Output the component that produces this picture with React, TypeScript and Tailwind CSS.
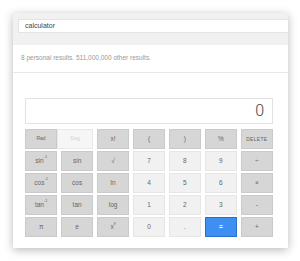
import React from 'react';

type Key = { label: React.ReactNode; kind: 'fn' | 'num' | 'eq' };

const fn = (label: React.ReactNode): Key => ({ label, kind: 'fn' });
const num = (label: React.ReactNode): Key => ({ label, kind: 'num' });

const Inv = ({ name }: { name: string }) => (
  <span>
    {name}
    <sup className="text-[4px] align-super">-1</sup>
  </span>
);

const rows: Key[][] = [
  [fn('x!'), fn('('), fn(')'), fn('%'), fn(<span className="text-[5px] tracking-[0.3px]">DELETE</span>)],
  [fn(<Inv name="sin" />), fn('sin'), fn('√'), num('7'), num('8'), num('9'), fn('÷')],
  [fn(<Inv name="cos" />), fn('cos'), fn('ln'), num('4'), num('5'), num('6'), fn('×')],
  [fn(<Inv name="tan" />), fn('tan'), fn('log'), num('1'), num('2'), num('3'), fn('-')],
  [
    fn('π'),
    fn('e'),
    fn(
      <span>
        x<sup className="text-[4px] align-super">y</sup>
      </span>
    ),
    num('0'),
    num('.'),
    { label: '=', kind: 'eq' },
    fn('+'),
  ],
];

const keyStyle: Record<Key['kind'], string> = {
  fn: 'bg-[#d6d6d6] border-[#cacaca] text-[#666]',
  num: 'bg-[#f1f1f1] border-[#e6e6e6] text-[#666]',
  eq: 'bg-[#3d8ff2] border-[#2a6fcf] text-white font-bold',
};

const CalcKey = ({ k }: { k: Key }) => (
  <div
    className={`h-[20px] flex items-center justify-center border text-[6.5px] leading-none ${keyStyle[k.kind]}`}
  >
    {k.label}
  </div>
);

export default function App() {
  return (
    <div
      className="w-[300px] h-[261px] bg-white pt-[13px] pl-[13px]"
      style={{ fontFamily: 'Arial, "Liberation Sans", sans-serif' }}
    >
      <div className="w-[275px] h-[235px] bg-white shadow-[0_2px_9px_rgba(0,0,0,0.28)] flex flex-col">
        {/* search bar */}
        <div className="h-[32px] bg-[#f1f1f1] pl-[5px] pt-[6px]">
          <div className="h-[14px] bg-white border-y border-l border-[#e4e4e4] flex items-center pl-[6px] text-[7px] text-[#444]">
            calculator
          </div>
        </div>

        {/* results count */}
        <div className="h-[28px] border-b border-[#e8e8e8] flex items-end pb-[9px] pl-[8px] text-[6.5px] text-[#999]">
          8 personal results. 511,000,000 other results.
        </div>

        {/* calculator */}
        <div className="pl-[12px] pr-[15px] pt-[25px]">
          <div className="h-[26px] border border-[#e2e2e2] flex items-center justify-end pr-[8px] text-[16px] font-light text-[#444] font-['Roboto',sans-serif]">
            0
          </div>
          <div className="mt-[5px] grid grid-cols-7 gap-x-[3.5px] gap-y-[2px]">
            <div className="col-span-2 flex h-[20px]">
              <div className="w-[32px] flex items-center justify-center bg-[#d6d6d6] border border-[#cacaca] text-[5px] text-[#666]">
                Rad
              </div>
              <div className="flex-1 flex items-center justify-center bg-[#f6f6f6] border border-[#e8e8e8] text-[5px] text-[#cfcfcf]">
                Deg
              </div>
            </div>
            {rows.flat().map((k, i) => (
              <CalcKey key={i} k={k} />
            ))}
          </div>
        </div>
      </div>
    </div>
  );
}
